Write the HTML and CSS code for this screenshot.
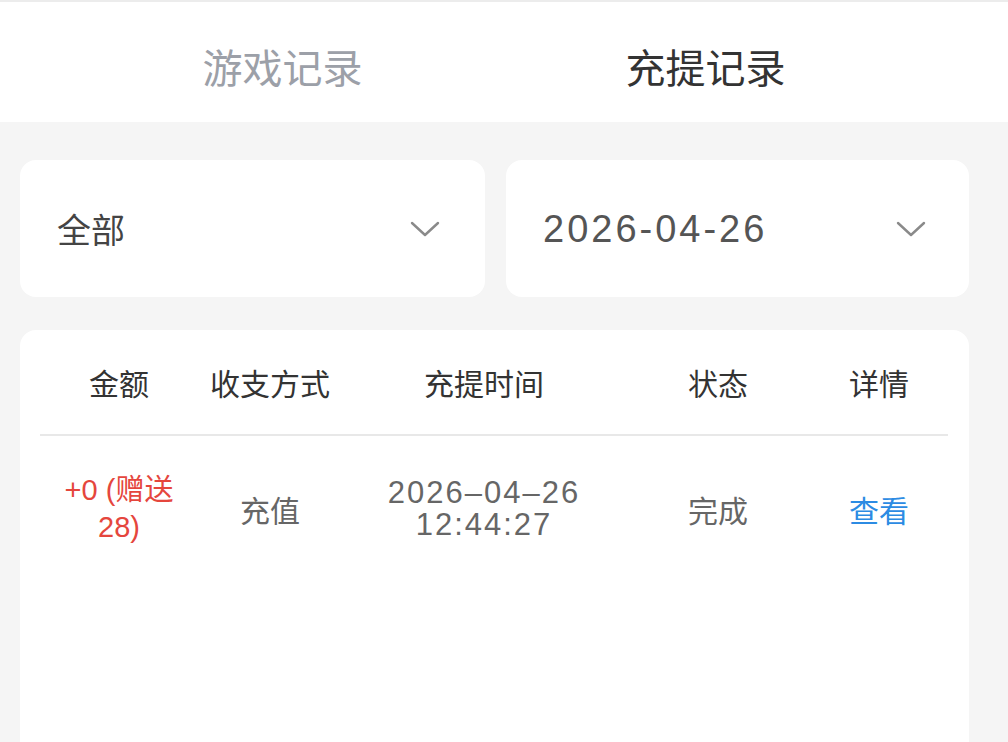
FILE: index.html
```html
<!DOCTYPE html>
<html lang="zh-CN">
<head>
  <meta charset="UTF-8" />
  <title>充提记录</title>
  <link rel="stylesheet" href="styles.css">
</head>
<body>
  <nav class="tabs">
    <a class="tab">游戏记录</a>
    <a class="tab active">充提记录</a>
  </nav>

  <section class="filters">
    <div class="select">
      <span class="select-text">全部</span>
      <svg class="chevron" width="30" height="16" viewBox="0 0 30 16"><polyline points="2,2 15,14 28,2" fill="none" stroke="#8a8a8a" stroke-width="2.4" stroke-linecap="round" stroke-linejoin="round"/></svg>
    </div>
    <div class="select date">
      <span class="select-text">2026-04-26</span>
      <svg class="chevron" width="30" height="16" viewBox="0 0 30 16"><polyline points="2,2 15,14 28,2" fill="none" stroke="#8a8a8a" stroke-width="2.4" stroke-linecap="round" stroke-linejoin="round"/></svg>
    </div>
  </section>

  <section class="records">
    <div class="row head">
      <div>金额</div>
      <div>收支方式</div>
      <div>充提时间</div>
      <div>状态</div>
      <div>详情</div>
    </div>
    <div class="row">
      <div class="amount">+0 (赠送<br>28)</div>
      <div>充值</div>
      <div class="time">2026–04–26<br>12:44:27</div>
      <div>完成</div>
      <div><a class="detail">查看</a></div>
    </div>
  </section>
</body>
</html>
```

FILE: styles.css
```css
body {
  margin: 0;
  background: #f5f5f5;
  font-family: "Liberation Sans", "Noto Sans CJK SC", sans-serif;
  color: #333;
  height: 742px;
  overflow: hidden;
}
.tabs {
  box-sizing: border-box;
  background: #fff;
  border-top: 2px solid #ececec;
  height: 122px;
  padding: 14px 20px 0 0;
  display: flex;
  align-items: center;
  justify-content: center;
  gap: 263px;
}
.tab {
  font-size: 40px;
  color: #9ca0a8;
  line-height: 1;
}
.tab.active {
  color: #333;
}
.filters {
  display: flex;
  gap: 21px;
  padding: 38px 39px 0 20px;
}
.select {
  flex: 1;
  height: 137px;
  background: #fff;
  border-radius: 16px;
  display: flex;
  align-items: center;
  justify-content: space-between;
  padding: 0 45px 0 37px;
}
.select.date {
  padding-right: 43px;
}
.select-text {
  font-size: 34px;
  color: #444;
}
.select.date .select-text {
  font-size: 38px;
  letter-spacing: 3px;
  color: #555;
  padding-top: 2px;
}
.chevron {
  display: block;
}
.records {
  margin: 33px 39px 0 20px;
  background: #fff;
  border-radius: 16px 16px 0 0;
  padding: 0 21px 0 20px;
  height: 420px;
}
.row {
  display: grid;
  grid-template-columns: 158px 144px 284px 184px 138px;
  align-items: center;
  text-align: center;
}
.row.head {
  height: 104px;
  border-bottom: 2px solid #e8e8e8;
  font-size: 30px;
  color: #333;
}
.row:not(.head) {
  height: 146px;
  font-size: 30px;
  color: #666;
}
.amount {
  color: #e5463d;
  font-size: 29px;
  line-height: 37px;
}
.time {
  font-size: 31px;
  line-height: 32px;
  letter-spacing: 2px;
}
.detail {
  color: #2c8be3;
}
```
